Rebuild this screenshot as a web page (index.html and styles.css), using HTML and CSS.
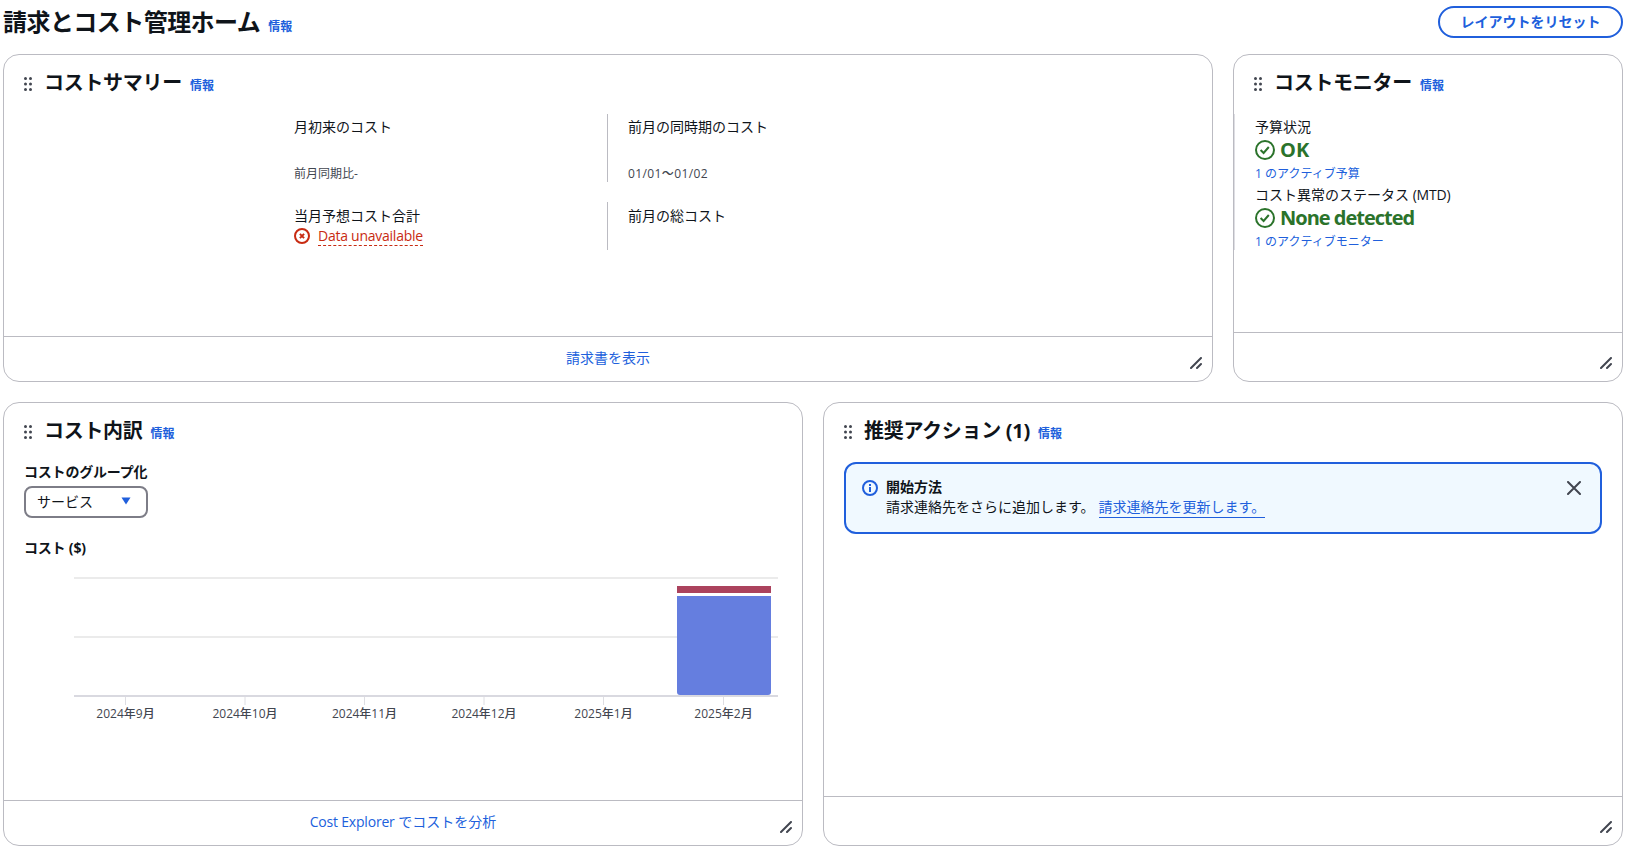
FILE: index.html
```html
<!DOCTYPE html>
<html lang="ja">

<head>
    <meta charset="UTF-8">
    <meta name="viewport" content="width=device-width, initial-scale=1.0">
    <title>請求とコスト管理ホーム</title>
    <link rel="stylesheet" href="styles.css">
</head>

<body>
    <header class="page-header">
        <h1>請求とコスト管理ホーム</h1>
        <a class="info">情報</a>
        <button class="reset-btn">レイアウトをリセット</button>
    </header>

    <main class="board">
        <section class="card summary">
            <div class="card-header">
                <svg class="handle" width="8" height="14" viewBox="0 0 8 14">
                    <path d="M1.5 1.5h0M6.5 1.5h0M1.5 7h0M6.5 7h0M1.5 12.5h0M6.5 12.5h0" />
                </svg>
                <h2>コストサマリー</h2>
                <a class="info">情報</a>
            </div>
            <div class="summary-grid">
                <div class="cell tall">
                    <div class="label">月初来のコスト</div>
                    <div class="small">前月同期比-</div>
                </div>
                <div class="cell tall divided">
                    <div class="label">前月の同時期のコスト</div>
                    <div class="small dates">01/01〜01/02</div>
                </div>
                <div class="cell">
                    <div class="label">当月予想コスト合計</div>
                    <div class="error">
                        <svg width="16" height="16" viewBox="0 0 16 16">
                            <circle cx="8" cy="8" r="7" />
                            <path d="M5.9 5.9l4.2 4.2M10.1 5.9l-4.2 4.2" />
                        </svg>
                        <span>Data unavailable</span>
                    </div>
                </div>
                <div class="cell divided">
                    <div class="label">前月の総コスト</div>
                </div>
            </div>
            <div class="card-footer">
                <a>請求書を表示</a>
                <svg class="resize" width="12" height="12" viewBox="0 0 12 12">
                    <path d="M1 11L11 1M7 11l4-4" />
                </svg>
            </div>
        </section>

        <section class="card monitor">
            <div class="card-header">
                <svg class="handle" width="8" height="14" viewBox="0 0 8 14">
                    <path d="M1.5 1.5h0M6.5 1.5h0M1.5 7h0M6.5 7h0M1.5 12.5h0M6.5 12.5h0" />
                </svg>
                <h2>コストモニター</h2>
                <a class="info">情報</a>
            </div>
            <div class="monitor-list">
                <div class="monitor-item">
                    <div class="label">予算状況</div>
                    <div class="status">
                        <svg width="20" height="20" viewBox="0 0 20 20">
                            <circle cx="10" cy="10" r="9" />
                            <path d="M5.6 10l3 3 5.2-6" />
                        </svg>
                        <span>OK</span>
                    </div>
                    <a class="small">1 のアクティブ予算</a>
                </div>
                <div class="monitor-item">
                    <div class="label">コスト異常のステータス <span class="latin">(MTD)</span></div>
                    <div class="status">
                        <svg width="20" height="20" viewBox="0 0 20 20">
                            <circle cx="10" cy="10" r="9" />
                            <path d="M5.6 10l3 3 5.2-6" />
                        </svg>
                        <span class="detected">None detected</span>
                    </div>
                    <a class="small">1 のアクティブモニター</a>
                </div>
            </div>
            <div class="card-footer empty">
                <svg class="resize" width="12" height="12" viewBox="0 0 12 12">
                    <path d="M1 11L11 1M7 11l4-4" />
                </svg>
            </div>
        </section>

        <section class="card breakdown">
            <div class="card-header">
                <svg class="handle" width="8" height="14" viewBox="0 0 8 14">
                    <path d="M1.5 1.5h0M6.5 1.5h0M1.5 7h0M6.5 7h0M1.5 12.5h0M6.5 12.5h0" />
                </svg>
                <h2>コスト内訳</h2>
                <a class="info">情報</a>
            </div>
            <div class="breakdown-body">
                <div class="field-label">コストのグループ化</div>
                <button class="select">
                    サービス
                    <svg width="10" height="8" viewBox="0 0 10 8">
                        <path d="M0.5 0.5h9L5 7.5z" />
                    </svg>
                </button>
                <div class="chart-title">コスト ($)</div>
                <svg class="chart" width="704" height="150" viewBox="0 0 704 150">
                    <path class="grid-line" d="M0 1h704M0 60h704" />
                    <path class="axis" d="M0 119h704" />
                    <path class="tick" d="M51.5 120v8M171 120v8M290.5 120v8M410 120v8M529.5 120v8M649.5 120v8" />
                    <rect class="bar-red" x="603" y="9" width="94" height="7" />
                    <path class="bar-blue" d="M603 19h94v96q0 3-3 3h-88q-3 0-3-3z" />
                    <text x="51.5" y="141">2024年9月</text>
                    <text x="171" y="141">2024年10月</text>
                    <text x="290.5" y="141">2024年11月</text>
                    <text x="410" y="141">2024年12月</text>
                    <text x="529.5" y="141">2025年1月</text>
                    <text x="649.5" y="141">2025年2月</text>
                </svg>
            </div>
            <div class="card-footer">
                <a><span class="latin">Cost Explorer</span> でコストを分析</a>
                <svg class="resize" width="12" height="12" viewBox="0 0 12 12">
                    <path d="M1 11L11 1M7 11l4-4" />
                </svg>
            </div>
        </section>

        <section class="card actions">
            <div class="card-header">
                <svg class="handle" width="8" height="14" viewBox="0 0 8 14">
                    <path d="M1.5 1.5h0M6.5 1.5h0M1.5 7h0M6.5 7h0M1.5 12.5h0M6.5 12.5h0" />
                </svg>
                <h2>推奨アクション (1)</h2>
                <a class="info">情報</a>
            </div>
            <div class="alert">
                <svg class="alert-icon" width="16" height="16" viewBox="0 0 16 16">
                    <circle cx="8" cy="8" r="7" />
                    <path d="M8 4v2M8 7v5" />
                </svg>
                <div class="alert-text">
                    <strong>開始方法</strong>
                    <div>請求連絡先をさらに追加します。<a>請求連絡先を更新します。</a></div>
                </div>
                <svg class="close" width="14" height="14" viewBox="0 0 14 14">
                    <path d="M1 1l12 12M13 1L1 13" />
                </svg>
            </div>
            <div class="card-footer empty">
                <svg class="resize" width="12" height="12" viewBox="0 0 12 12">
                    <path d="M1 11L11 1M7 11l4-4" />
                </svg>
            </div>
        </section>
    </main>
</body>

</html>
```
FILE: styles.css
```css
*,
*::before,
*::after {
    box-sizing: border-box;
}

:root {
    --text: #0f141a;
    --muted: #424650;
    --blue: #205fdc;
    --green: #2b732b;
    --red: #c82b12;
    --border: #bbbbc2;
}

body {
    margin: 0;
    padding: 0 2px 0 3px;
    background-color: #fff;
    color: var(--text);
    font-family: "Open Sans", "Noto Sans CJK JP", sans-serif;
    font-size: 14px;
    line-height: 20px;
}

h1,
h2 {
    margin: 0;
    font-weight: 700;
    white-space: nowrap;
}

h1 {
    font-size: 24px;
    line-height: 30px;
    letter-spacing: -0.55px;
}

h2 {
    font-size: 20px;
    line-height: 24px;
    letter-spacing: -0.3px;
}

a {
    color: var(--blue);
}

svg {
    display: block;
    flex-shrink: 0;
    fill: none;
}

button {
    font-family: inherit;
    font-size: 14px;
    background-color: #fff;
}

.info {
    margin-left: 8px;
    font-size: 12px;
    font-weight: 700;
}

.latin {
    font-weight: 500;
    letter-spacing: -0.2px;
}

.page-header {
    display: flex;
    align-items: baseline;
    height: 54px;
    padding-top: 7px;
}

.reset-btn {
    align-self: flex-start;
    width: 185px;
    height: 32px;
    margin: -1px 0 0 auto;
    padding: 0 0 2px;
    border: 2px solid var(--blue);
    border-radius: 16px;
    color: var(--blue);
    font-weight: 700;
}

.board {
    display: grid;
    grid-template-columns: repeat(4, 390px);
    grid-template-rows: 328px 444px;
    gap: 20px;
}

.card {
    display: flex;
    flex-direction: column;
    border: 1px solid var(--border);
    border-radius: 16px;
}

.summary {
    grid-column: span 3;
}

.breakdown,
.actions {
    grid-column: span 2;
}

.card-header {
    display: flex;
    align-items: baseline;
    height: 59px;
    padding: 16px 20px 0;
}

.handle {
    align-self: flex-start;
    margin: 6px 12px 0 0;
    stroke: var(--muted);
    stroke-width: 3;
    stroke-linecap: round;
}

.card-footer {
    display: flex;
    justify-content: center;
    position: relative;
    height: 45px;
    margin-top: auto;
    padding-top: 11px;
    border-top: 1px solid var(--border);
}

.card-footer.empty {
    height: 49px;
}

.resize {
    position: absolute;
    right: 10px;
    bottom: 12px;
    stroke: var(--muted);
    stroke-width: 2;
    stroke-linecap: round;
}

.small {
    display: block;
    font-size: 12px;
    line-height: 16px;
}

.dates {
    font-weight: 500;
    letter-spacing: 0.4px;
}

.summary-grid {
    display: grid;
    grid-template-columns: 313px 314px;
    row-gap: 20px;
    padding-left: 290px;
}

.cell {
    height: 48px;
    padding-top: 4px;
}

.cell.tall {
    height: 68px;
    padding-top: 3px;
}

.cell .small {
    margin-top: 29px;
    color: var(--muted);
}

.divided {
    padding-left: 20px;
    border-left: 1px solid var(--border);
}

.error {
    display: flex;
    align-items: center;
    gap: 8px;
    color: var(--red);
    font-weight: 500;
}

.error svg {
    stroke: var(--red);
    stroke-width: 2;
}

.error span {
    padding-top: 1px;
    line-height: 18px;
    letter-spacing: -0.25px;
    border-bottom: 1px dashed var(--red);
}

.monitor-list {
    height: 136px;
    padding: 3px 20px 0;
    border-left: 1px solid #dedee3;
}

.monitor-item {
    height: 68px;
}

.status {
    display: flex;
    align-items: center;
    gap: 5px;
    height: 25px;
    margin-bottom: 4px;
    color: var(--green);
    font-size: 20px;
    font-weight: 700;
}

.status svg {
    stroke: var(--green);
    stroke-width: 2;
}

.detected {
    letter-spacing: -1px;
}

.breakdown-body {
    padding: 0 20px;
}

.field-label,
.chart-title {
    font-weight: 700;
    letter-spacing: -0.2px;
}

.select {
    display: flex;
    align-items: center;
    justify-content: space-between;
    width: 124px;
    height: 32px;
    margin: 4px 0 20px;
    padding: 0 15px 2px 11px;
    border: 2px solid #7d7d87;
    border-radius: 8px;
    color: var(--text);
}

.select path {
    fill: var(--blue);
}

.chart {
    margin: 19px 0 0 50px;
}

.chart text {
    fill: var(--muted);
    font-size: 12px;
    font-weight: 500;
    text-anchor: middle;
}

.grid-line {
    stroke: #ebebeb;
    stroke-width: 2;
}

.axis {
    stroke: #d9d9e0;
    stroke-width: 2;
}

.tick {
    stroke: #dedee3;
}

.bar-red {
    fill: #ab425d;
}

.bar-blue {
    fill: #657edf;
}

.alert {
    display: flex;
    height: 72px;
    margin: 0 20px;
    padding: 14px 18px 0 16px;
    border: 2px solid var(--blue);
    border-radius: 12px;
    background-color: #f0f9ff;
}

.alert-icon {
    margin: 2px 8px 0 0;
    stroke: var(--blue);
    stroke-width: 2;
}

.alert-text {
    margin-top: -1px;
}

.alert a {
    margin-left: 4px;
    padding-bottom: 1px;
    border-bottom: 1px solid var(--blue);
}

.close {
    margin: 3px 1px 0 auto;
    stroke: var(--muted);
    stroke-width: 2;
    stroke-linecap: round;
}
```
